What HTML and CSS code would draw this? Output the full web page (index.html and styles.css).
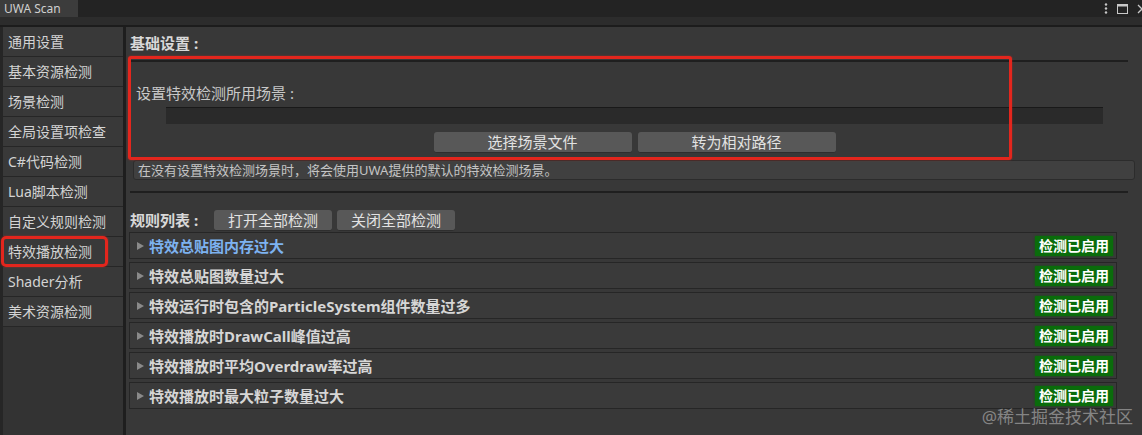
FILE: index.html
```html
<!DOCTYPE html>
<html lang="zh-CN">
<head>
    <meta charset="UTF-8">
    <title>UWA Scan</title>
    <link rel="stylesheet" href="styles.css">
</head>
<body>
    <div class="titlebar">
        <div class="tab">UWA Scan</div>
        <div class="win-icons">
            <svg width="4" height="11" viewBox="0 0 4 11"><circle cx="2" cy="1.5" r="1.2" fill="#c8c8c8"/><circle cx="2" cy="5.5" r="1.2" fill="#c8c8c8"/><circle cx="2" cy="9.5" r="1.2" fill="#c8c8c8"/></svg>
            <svg width="11" height="10" viewBox="0 0 11 10"><rect x="0.5" y="0.5" width="10" height="9" fill="none" stroke="#c8c8c8"/><rect x="0.5" y="0.5" width="10" height="2" fill="#c8c8c8"/></svg>
            <svg width="10" height="10" viewBox="0 0 10 10"><path d="M1 1 L9 9 M9 1 L1 9" stroke="#c8c8c8" stroke-width="1.3"/></svg>
        </div>
    </div>
    <div class="toolbar"></div>

    <div class="main">
        <div class="sidebar">
            <div class="nav-item">通用设置</div>
            <div class="nav-item">基本资源检测</div>
            <div class="nav-item">场景检测</div>
            <div class="nav-item">全局设置项检查</div>
            <div class="nav-item">C#代码检测</div>
            <div class="nav-item">Lua脚本检测</div>
            <div class="nav-item">自定义规则检测</div>
            <div class="nav-item">特效播放检测</div>
            <div class="nav-item">Shader分析</div>
            <div class="nav-item">美术资源检测</div>
            <div class="mark mark-nav"></div>
        </div>

        <div class="content">
            <div class="section-title">基础设置 :</div>
            <div class="rule-line"></div>

            <div class="field-label">设置特效检测所用场景 :</div>
            <div class="path-field"></div>
            <div class="btn-row">
                <button class="btn btn-wide">选择场景文件</button>
                <button class="btn btn-wide">转为相对路径</button>
            </div>
            <div class="help-box">在没有设置特效检测场景时，将会使用UWA提供的默认的特效检测场景。</div>
            <div class="rule-line line-gap"></div>

            <div class="rules-head">
                <span class="section-title inline">规则列表 :</span>
                <button class="btn btn-small">打开全部检测</button>
                <button class="btn btn-small">关闭全部检测</button>
            </div>

            <div class="rule-list">
                <div class="rule-row"><span class="arrow"></span><span class="rule-name active">特效总贴图内存过大</span><span class="badge">检测已启用</span></div>
                <div class="rule-row"><span class="arrow"></span><span class="rule-name">特效总贴图数量过大</span><span class="badge">检测已启用</span></div>
                <div class="rule-row"><span class="arrow"></span><span class="rule-name">特效运行时包含的ParticleSystem组件数量过多</span><span class="badge">检测已启用</span></div>
                <div class="rule-row"><span class="arrow"></span><span class="rule-name">特效播放时DrawCall峰值过高</span><span class="badge">检测已启用</span></div>
                <div class="rule-row"><span class="arrow"></span><span class="rule-name">特效播放时平均Overdraw率过高</span><span class="badge">检测已启用</span></div>
                <div class="rule-row"><span class="arrow"></span><span class="rule-name">特效播放时最大粒子数量过大</span><span class="badge">检测已启用</span></div>
            </div>

            <div class="mark mark-main"></div>
            <div class="watermark">@稀土掘金技术社区</div>
        </div>
    </div>
</body>
</html>
```

FILE: styles.css
```css
body {
    margin: 0;
    height: 435px;
    overflow: hidden;
    background-color: #383838;
    font-family: "Noto Sans", "Noto Sans CJK SC", sans-serif;
    color: #d2d2d2;
}
.titlebar {
    display: flex;
    height: 17px;
    background-color: #232323;
}
.tab {
    width: 74px;
    padding-left: 4px;
    background-color: #3c3c3c;
    font-size: 12px;
    line-height: 17px;
    color: #d0d0d0;
}
.win-icons {
    margin-left: auto;
    display: flex;
    align-items: center;
    gap: 9px;
    margin-right: -5px;
}
.toolbar {
    height: 8px;
    background-color: #2c2c2c;
    border-bottom: 2px solid #1c1c1c;
}
.main {
    display: flex;
    height: 408px;
}
.sidebar {
    position: relative;
    width: 120px;
    border-left: 3px solid #262626;
    border-right: 3px solid #1e1e1e;
    background-color: #333333;
}
.nav-item {
    height: 29px;
    line-height: 29px;
    padding-left: 5px;
    border-bottom: 1px solid #262626;
    background-color: #393939;
    font-size: 14px;
    color: #d4d4d4;
    white-space: nowrap;
}
.content {
    position: relative;
    flex: 1;
    padding-left: 4px;
}
.section-title {
    height: 30px;
    margin-top: 1px;
    line-height: 30px;
    font-size: 15px;
    font-weight: bold;
    color: #d8d8d8;
}
.section-title.inline {
    height: auto;
    margin: 0 16px 0 0;
    line-height: 21px;
}
.rule-line {
    height: 2px;
    margin: 2px 14px 0 0;
    background-color: #1f1f1f;
}
.line-gap {
    margin-top: 11px;
}
.field-label {
    margin-top: 21px;
    padding-left: 6px;
    font-size: 15px;
    line-height: 20px;
    color: #c8c8c8;
}
.path-field {
    height: 16px;
    margin: 4px 39px 0 36px;
    background-color: #2a2a2a;
    border-top: 1px solid #191919;
}
.btn-row {
    display: flex;
    justify-content: center;
    gap: 6px;
    margin: 8px 39px 0 36px;
}
.btn {
    height: 21px;
    padding: 0;
    border: none;
    border-bottom: 1px solid #2e2e2e;
    border-radius: 3px;
    background-color: #585858;
    font-family: inherit;
    font-size: 15px;
    line-height: 20px;
    color: #e2e2e2;
}
.btn-wide {
    width: 198px;
}
.btn-small {
    width: 118px;
    margin-right: 5px;
}
.help-box {
    height: 18px;
    margin: 7px 7px 0 3px;
    padding-left: 4px;
    background-color: #404040;
    border: 1px solid #2c2c2c;
    border-radius: 3px;
    font-size: 13px;
    line-height: 18px;
    color: #c4c4c4;
}
.rules-head {
    display: flex;
    align-items: center;
    margin-top: 17px;
}
.rule-list {
    display: flex;
    flex-direction: column;
    gap: 3px;
    margin: 1px 25px 0 -1px;
}
.rule-row {
    display: flex;
    align-items: center;
    height: 25px;
    padding: 0 3px 0 7px;
    background-color: #3a3a3a;
    border: 1px solid #262626;
}
.arrow {
    width: 0;
    height: 0;
    margin-right: 5px;
    border-top: 4.5px solid transparent;
    border-bottom: 4.5px solid transparent;
    border-left: 7px solid #8a8a8a;
}
.rule-name {
    font-size: 15px;
    font-weight: bold;
    color: #d6d6d6;
}
.rule-name.active {
    color: #7db2f0;
}
.badge {
    margin-left: auto;
    width: 78px;
    height: 20px;
    background-color: #0a6c0b;
    box-shadow: 0 0 2px #0b5a0b;
    font-size: 14px;
    font-weight: bold;
    line-height: 20px;
    text-align: center;
    color: #ffffff;
}
.mark {
    position: absolute;
    border: 3px solid #e3261d;
    box-shadow: 0 0 2px rgba(230, 40, 30, 0.6);
}
.mark-nav {
    left: -2px;
    top: 209px;
    width: 101px;
    height: 25px;
    border-radius: 5px;
}
.mark-main {
    left: 2px;
    top: 29px;
    width: 878px;
    height: 98px;
    border-radius: 3px;
}
.watermark {
    position: absolute;
    right: 9px;
    bottom: 7px;
    font-size: 17px;
    color: rgba(200, 200, 200, 0.55);
}
```
